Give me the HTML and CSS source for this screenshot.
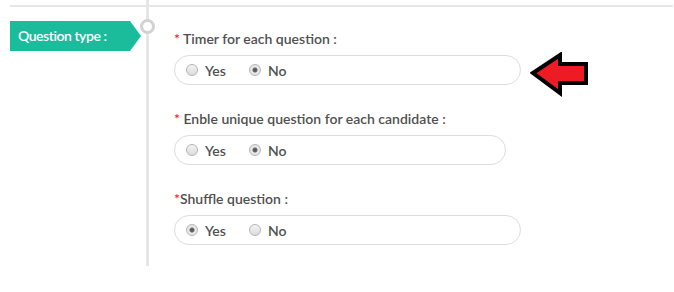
FILE: index.html
```html
<!DOCTYPE html>
<html lang="en">
<head>
  <meta charset="UTF-8" />
  <title>Question settings</title>
  <link rel="stylesheet" href="styles.css">
</head>
<body>
  <div class="section">
    <div class="side">
      <div class="hline"></div>
      <div class="tag">Question type :</div>
    </div>

    <div class="rail"><span class="node"></span></div>

    <div class="main">
      <div class="hline"></div>
      <div class="fields">

        <div class="field">
          <div class="label"><span class="req">*</span> Timer for each question :</div>
          <div class="row">
            <div class="pill wide">
              <label class="opt"><input type="radio" name="timer"> Yes</label>
              <label class="opt"><input type="radio" name="timer" checked> No</label>
            </div>
            <svg class="pointer" width="62" height="46" viewBox="0 0 62 46">
              <polygon points="3,21 30,3 30,12 56,12 56,31 30,31 30,41" fill="#ed1c24" stroke="#000" stroke-width="4" stroke-linejoin="miter" />
            </svg>
          </div>
        </div>

        <div class="field">
          <div class="label"><span class="req">*</span> Enble unique question for each candidate :</div>
          <div class="pill narrow">
            <label class="opt"><input type="radio" name="unique"> Yes</label>
            <label class="opt"><input type="radio" name="unique" checked> No</label>
          </div>
        </div>

        <div class="field">
          <div class="label"><span class="req">*</span>Shuffle question :</div>
          <div class="pill wide">
            <label class="opt"><input type="radio" name="shuffle" checked> Yes</label>
            <label class="opt"><input type="radio" name="shuffle"> No</label>
          </div>
        </div>

      </div>
    </div>
  </div>
</body>
</html>
```

FILE: styles.css
```css
body { margin: 0; font-family: Lato, "Open Sans", sans-serif; font-weight: 600; color: #505050; background: #fff; }
.section { display: flex; align-items: flex-start; }
.hline { height: 2px; margin-top: 5px; background: #e6e6e6; }

.side { width: 136px; margin-left: 10px; }
.tag { margin-top: 14px; width: 131px; height: 30px; line-height: 30px; padding-left: 8px; box-sizing: border-box; background: #1abc9c; color: #fff; font-size: 14px; letter-spacing: -0.45px; clip-path: polygon(0 0, 120px 0, 131px 15px, 120px 30px, 0 30px); }

.rail { position: relative; width: 3px; height: 266px; background: #e6e6e6; }
.node { position: absolute; left: -6px; top: 19px; width: 9px; height: 9px; border: 3px solid #d2d2d2; border-radius: 50%; background: #fff; }

.main { flex: 1; margin-right: 1px; }
.fields { padding: 22px 0 0 25px; }
.field { margin-bottom: 24px; }
.label { font-size: 14px; height: 20px; line-height: 20px; margin-bottom: 6px; }
.req { color: #e8262b; font-size: 14px; line-height: 1; }

.row { display: flex; align-items: flex-start; }
.pointer { margin: -3px 0 -13px 9px; }

.pill { display: flex; align-items: center; height: 30px; box-sizing: border-box; border: 1px solid #ddd; border-radius: 15px; padding-left: 11px; }
.wide { width: 347px; }
.narrow { width: 332px; }

.opt { display: flex; align-items: center; font-size: 14px; margin-right: 23px; }
.opt input { appearance: none; -webkit-appearance: none; margin: 0 7px 0 0; width: 12px; height: 12px; border: 1px solid #b5b5b5; border-radius: 50%; background: linear-gradient(#f4f4f4, #dcdcdc); box-sizing: border-box; }
.opt input:checked { background: radial-gradient(circle, #555 0, #666 2px, #e9e9e9 3px, #e0e0e0 100%); }
```
